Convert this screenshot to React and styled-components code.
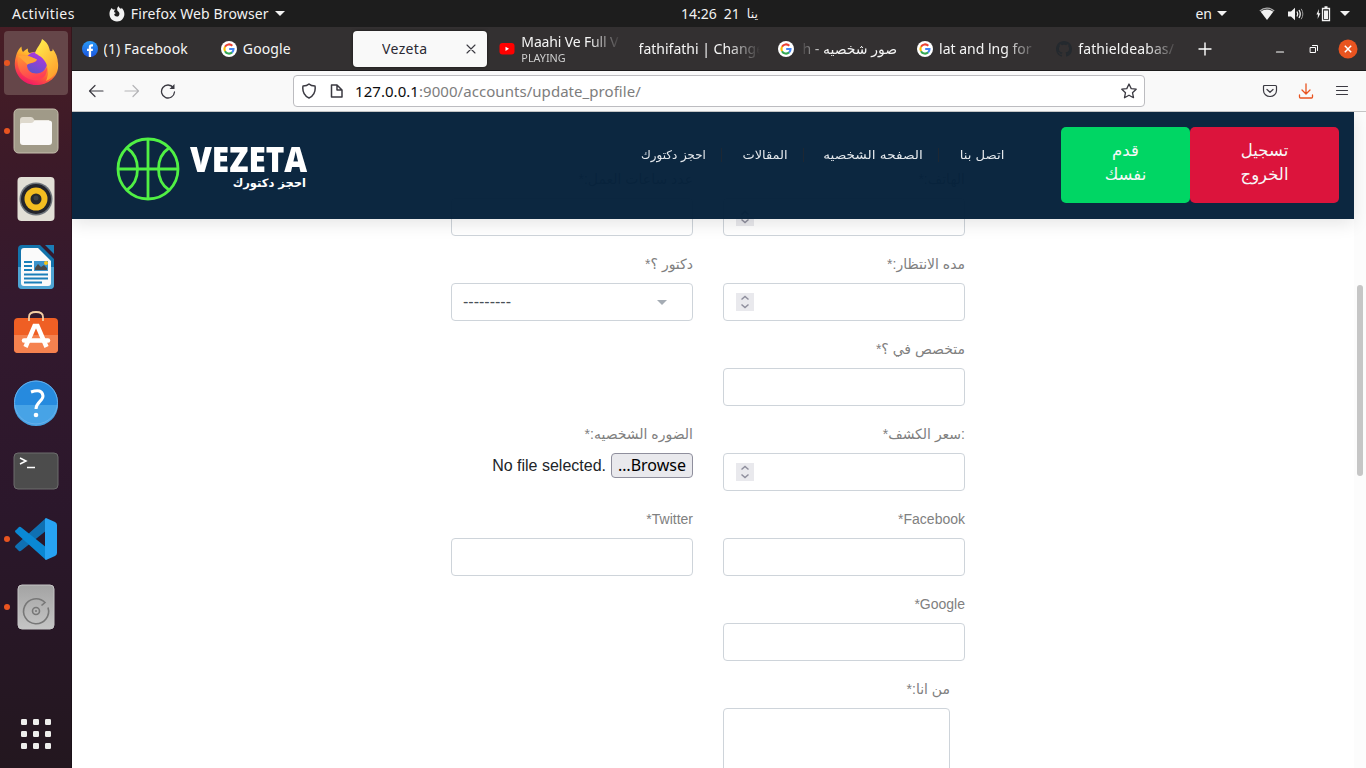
import React from "react";
import styled, { createGlobalStyle } from "styled-components";

const UI_FONT = '"Noto Sans", "Open Sans", "DejaVu Sans", sans-serif';
const PAGE_FONT = '"Liberation Sans", "DejaVu Sans", sans-serif';
const ARABIC_FONT = '"DejaVu Sans", sans-serif';

const Global = createGlobalStyle`
  * { box-sizing: border-box; }
  body { margin: 0; overflow: hidden; background: #fff; font-family: ${UI_FONT}; }
  svg { display: block; flex: none; }
`;

/* ---------- shared ---------- */
const Text = styled.span`
  font-family: ${(p) => p.$font || UI_FONT};
  font-size: ${(p) => p.$size || 14}px;
  letter-spacing: ${(p) => p.$track || 0}px;
  font-weight: ${(p) => p.$weight || 400};
  color: ${(p) => p.$color || "inherit"};
  white-space: nowrap;
`;

/* ---------- desktop shell ---------- */
const Desktop = styled.div`
  width: 1366px;
  height: 768px;
  display: flex;
  flex-direction: column;
  overflow: hidden;
`;

const TopBar = styled.header`
  height: 27px;
  flex: none;
  display: flex;
  align-items: center;
  background: #1d1d1d;
  color: #f2f2f2;
`;
const TopLeft = styled.div`
  width: 681px;
  padding-left: 12px;
  display: flex;
  align-items: center;
`;
const AppMenu = styled.div`
  margin-left: 34px;
  display: flex;
  align-items: center;
  gap: 6px;
`;
const Clock = styled.div`
  display: flex;
  align-items: center;
  gap: 7px;
`;
const Tray = styled.div`
  margin-left: auto;
  padding-right: 16px;
  display: flex;
  align-items: center;
`;
const TrayItem = styled.div`
  display: flex;
  align-items: center;
  gap: 5px;
  margin-left: ${(p) => p.$gap || 0}px;
`;
const Workspace = styled.div`
  flex: 1;
  min-height: 0;
  display: flex;
`;

/* ---------- dock ---------- */
const Dock = styled.nav`
  width: 72px;
  flex: none;
  padding: 4px 4px 2px;
  display: flex;
  flex-direction: column;
  gap: 4px;
  background: linear-gradient(#481d25 0%, #3c1a28 18%, #33192e 38%, #2b172b 65%, #23171f 100%);
  border-right: 1px solid rgba(0, 0, 0, 0.25);
`;
const DockTile = styled.div`
  position: relative;
  width: 64px;
  height: 64px;
  flex: none;
  display: grid;
  place-items: center;
  border-radius: 4px;
  background: ${(p) => (p.$active ? "#654649" : "transparent")};
  margin-top: ${(p) => (p.$last ? "auto" : 0)};
`;
const RunningDot = styled.i`
  position: absolute;
  left: 0;
  top: 29px;
  width: 6px;
  height: 6px;
  border-radius: 50%;
  background: #e95420;
`;

/* ---------- browser chrome ---------- */
const Browser = styled.main`
  flex: 1;
  min-width: 0;
  display: flex;
  flex-direction: column;
`;
const TabStrip = styled.div`
  height: 44px;
  flex: none;
  display: flex;
  align-items: stretch;
  background: #333031;
  border-bottom: 1px solid #1c1b1c;
  color: #f5f5f5;
`;
const Tab = styled.div`
  width: 139.25px;
  flex: none;
  padding: 4px 2.4px 3px 2.6px;
`;
const TabBody = styled.div`
  height: 36px;
  display: flex;
  align-items: center;
  padding: 0 10px 0 7px;
  gap: 6px;
  border-radius: 4px;
  background: ${(p) => (p.$active ? "#f9f9f9" : "transparent")};
  color: ${(p) => (p.$active ? "#2b2a33" : "#f5f5f5")};
  box-shadow: ${(p) => (p.$active ? "0 0 3px rgba(0,0,0,.6)" : "none")};
`;
const TabText = styled.div`
  flex: 1;
  min-width: 0;
  overflow: hidden;
  display: flex;
  flex-direction: column;
  align-items: ${(p) => (p.$rtl ? "flex-end" : "flex-start")};
  margin-left: ${(p) => p.$indent || 0}px;
  margin-right: ${(p) => (p.$rtl ? -2 : p.$fade ? -4 : 0)}px;
  mask-image: ${(p) =>
    p.$fade === "right"
      ? "linear-gradient(to left, transparent, #000 32px)"
      : p.$fade === "left"
      ? "linear-gradient(to right, transparent, #000 24px)"
      : "none"};
`;
const TabLine = styled(Text)`
  line-height: ${(p) => p.$lh || 20}px;
`;
const TabNote = styled(TabLine)`
  padding-top: 1px;
`;
const WindowButtons = styled.div`
  flex: 1;
  display: flex;
  align-items: center;
  justify-content: space-between;
  padding: 0 8px 0 12px;
`;
const WindowGroup = styled.div`
  display: flex;
  align-items: center;
  gap: 24px;
  > :last-child { margin-left: -5px; }
`;
const Toolbar = styled.div`
  height: 41px;
  flex: none;
  display: flex;
  align-items: center;
  background: #f9f9f9;
  border-bottom: 1px solid #c4c4c4;
`;
const NavButtons = styled.div`
  width: 221px;
  padding-left: 16px;
  display: flex;
  align-items: center;
  gap: 20px;
`;
const UrlBar = styled.div`
  width: 852px;
  height: 32px;
  padding: 0 7px;
  display: flex;
  align-items: center;
  background: #fff;
  border: 1px solid #bcbcc0;
  border-radius: 4px;
`;
const UrlText = styled.div`
  flex: 1;
  margin-left: 10px;
  font-size: 15px;
  letter-spacing: 0.05px;
  line-height: 20px;
  color: #7d7d7d;
  white-space: nowrap;
  b { font-weight: 400; color: #0c0c0d; }
`;
const ToolActions = styled.div`
  flex: 1;
  padding-right: 16px;
  display: flex;
  align-items: center;
  justify-content: flex-end;
  gap: 20px;
`;

/* ---------- site ---------- */
const Viewport = styled.div`
  position: relative;
  flex: 1;
  min-height: 0;
  display: flex;
  overflow: hidden;
  background: #fff;
`;
const Page = styled.div`
  flex: 1;
  padding: 57px 0 0 379px;
  overflow: hidden;
`;
const Scrollbar = styled.div`
  width: 12px;
  padding: 173px 0 0 3px;
  background: #fcfcfc;
`;
const Thumb = styled.div`
  width: 6px;
  height: 191px;
  border-radius: 3px;
  background: #c6c6c6;
`;
const SiteHeader = styled.div`
  position: absolute;
  top: 0;
  left: 0;
  right: 12px;
  height: 107px;
  display: flex;
  align-items: flex-start;
  padding: 15px 15px 0 44px;
  background: rgba(4, 32, 58, 0.97);
  box-shadow: 0 5px 16px rgba(0, 0, 0, 0.1);
`;
const Logo = styled.div`
  width: 192px;
  padding-top: 10px;
  display: flex;
  align-items: flex-start;
  justify-content: space-between;
`;
const LogoWords = styled.div`
  width: 119px;
  padding-top: 7px;
  display: flex;
  flex-direction: column;
  align-items: flex-end;
  color: #fff;
`;
const LogoName = styled.div`
  font: 800 36px/30px "Open Sans", sans-serif;
  width: 118px;
  transform: scaleX(0.875);
  transform-origin: 0 50%;
`;
const LogoTag = styled.div`
  padding: 2px 2px 0 0;
  font: 700 11.5px/14px ${ARABIC_FONT};
  white-space: nowrap;
`;
const SiteNav = styled.div`
  margin-left: auto;
  padding: 18px 56px 0 0;
  display: flex;
  align-items: center;
  font: 400 12px/20px ${ARABIC_FONT};
  color: #e4e8ec;
`;
const NavLink = styled.div`
  white-space: nowrap;
  width: ${(p) => p.$w}px;
  display: flex;
  justify-content: center;
  transform: scaleX(${(p) => p.$stretch || 1});
`;
const NavRule = styled.i`
  width: 1px;
  height: 14px;
  margin: 0 ${(p) => p.$right}px 0 ${(p) => p.$left}px;
  background: #1d2733;
`;
const SiteButton = styled.div`
  width: ${(p) => p.$w}px;
  height: 76px;
  padding-top: 12px;
  border-radius: 5px;
  background: ${(p) => p.$bg};
  color: #f7f7f7;
  text-align: center;
  font: 400 16.5px/24px ${ARABIC_FONT};
`;

/* ---------- form ---------- */
const FormRow = styled.div`
  direction: rtl;
  width: 514px;
  height: 85px;
  display: grid;
  grid-template-columns: 242px 242px;
  gap: 30px;
`;
const Field = styled.div`
  width: ${(p) => p.$w || 242}px;
  margin-right: ${(p) => p.$inset || 0}px;
`;
const Label = styled.div`
  height: 29px;
  font: 400 14px/21px ${PAGE_FONT};
  color: #808080;
  white-space: nowrap;
`;
const Input = styled.div`
  height: ${(p) => p.$h || 38}px;
  padding: 0 12px ${(p) => (p.$spread ? "0 11px" : "")};
  display: flex;
  align-items: center;
  justify-content: ${(p) => (p.$spread ? "space-between" : "flex-end")};
  border: 1px solid #ced4da;
  border-radius: 4px;
  background: #fff;
  font: 400 16px/24px ${PAGE_FONT};
  color: #495057;
`;
const SelectCaret = styled.i`
  width: 0;
  margin-right: 13px;
  border: 5px solid transparent;
  border-top-color: #a5acb4;
  border-bottom: 0;
`;
const FilePicker = styled.div`
  display: flex;
  align-items: center;
  gap: 5px;
  font: 400 16px/24px ${PAGE_FONT};
  color: #212529;
  white-space: nowrap;
`;
const BrowseButton = styled.div`
  width: 82px;
  height: 25px;
  padding-bottom: 2px;
  display: grid;
  place-items: center;
  border: 1px solid #8f8f9d;
  border-radius: 4px;
  background: #e9e9ed;
  color: #000;
  font: 400 16px/20px ${UI_FONT};
`;

/* ---------- icons ---------- */
const Caret = () => (
  <svg width="10" height="5"><path d="M0 0H10L5 5Z" fill="#f2f2f2" /></svg>
);
const FirefoxMono = () => (
  <svg width="16" height="16" viewBox="0 0 16 16">
    <path d="M1 4.800 2.600 2 4 3.600Q5 3.200 6.500 3.600 5 4.600 5 6L6.800 7 5.200 8.300C5.400 10.700 8.600 11.400 10 9.400 11 7.700 10.200 6 8.600 5 7.600 3 8.300 1.100 9.700.2 10 1.800 11.200 2.200 12.200 3.100L12.600 1.800C18 7 15 15.600 8 15.600 2 15.600-.8 9.800 1 4.800Z" fill="#f2f2f2" />
  </svg>
);
const Wifi = () => (
  <svg width="16" height="14" viewBox="0 0 16 14">
    <path d="M.8 4C5 .2 11 .2 15.200 4" fill="none" stroke="#aaa" strokeWidth="1.200" />
    <path d="M1.700 4.800C5.500 1.700 10.500 1.700 14.300 4.800L8 13Z" fill="#f2f2f2" />
  </svg>
);
const Volume = () => (
  <svg width="16" height="14" viewBox="0 0 16 14">
    <path d="M0 4.500H3L7 .8V13.200L3 9.500H0Z" fill="#f2f2f2" />
    <path d="M9 4.500Q10.500 7 9 9.500M11 3Q13.500 7 11 11" fill="none" stroke="#f2f2f2" strokeWidth="1.300" />
    <path d="M13.200 1.800Q16.500 7 13.200 12.200" fill="none" stroke="#999" />
  </svg>
);
const Battery = () => (
  <svg width="15" height="16" viewBox="0 0 15 16">
    <path d="M3 3 .4 8.500H2L1.600 13 4.400 7.200H2.700Z" fill="#f2f2f2" />
    <path d="M6.500 2.500H13.500V14.500H6.500ZM8.500 1H11.500" fill="none" stroke="#f2f2f2" strokeWidth="1.300" />
    <path d="M8 4.500H12V13H8Z" fill="#f2f2f2" />
  </svg>
);
const Facebook = () => (
  <svg width="16" height="16" viewBox="0 0 16 16">
    <defs><linearGradient id="fb" x1="0" y1="0" x2="0" y2="1"><stop stopColor="#2a9af5" /><stop offset="1" stopColor="#1a55e0" /></linearGradient></defs>
    <circle cx="8" cy="8" r="8" fill="url(#fb)" />
    <path d="M6.800 16V10H5V7.700H6.800V6.200C6.800 4.200 8 3.300 9.600 3.300H11V5.400H10.100C9.300 5.400 9.100 5.800 9.100 6.400V7.700H11L10.700 10H9.100V16Z" fill="#fff" />
  </svg>
);
const Google = () => (
  <svg width="16" height="16" viewBox="0 0 16 16">
    <circle cx="8" cy="8" r="8" fill="#fff" />
    <g fill="none" strokeWidth="2.100">
      <path d="M11.300 4.700A4.600 4.600 0 0 0 4 5.800" stroke="#ea4335" />
      <path d="M4 5.800A4.600 4.600 0 0 0 4 10.200" stroke="#fbbc05" />
      <path d="M4 10.200A4.600 4.600 0 0 0 11.100 11.400" stroke="#34a853" />
      <path d="M11.100 11.400A4.600 4.600 0 0 0 12.500 8H8.200" stroke="#4285f4" />
    </g>
  </svg>
);
const YouTube = () => (
  <svg width="16" height="12" viewBox="0 0 16 12">
    <rect width="15" height="11.500" x=".5" rx="3" fill="#f00" />
    <path d="M6.500 3.700V7.900L10 5.800Z" fill="#fff" />
  </svg>
);
const GitHub = () => (
  <svg width="16" height="16" viewBox="0 0 16 16">
    <path fill="#24292e" d="M8 0C3.580 0 0 3.580 0 8c0 3.540 2.290 6.530 5.470 7.590.4.070.55-.17.55-.38 0-.19-.01-.82-.01-1.490-2.010.37-2.530-.49-2.690-.94-.09-.23-.48-.94-.82-1.130-.28-.15-.68-.52-.01-.53.63-.01 1.080.58 1.230.82.720 1.210 1.870.87 2.330.66.070-.52.28-.87.510-1.070-1.780-.2-3.640-.89-3.640-3.950 0-.87.310-1.590.82-2.150-.08-.2-.36-1.020.08-2.120 0 0 .67-.21 2.200.82.640-.18 1.320-.27 2-.27s1.360.09 2 .27c1.530-1.040 2.200-.82 2.200-.82.440 1.100.16 1.920.08 2.120.510.56.82 1.270.82 2.150 0 3.070-1.870 3.750-3.650 3.950.29.250.54.730.54 1.480 0 1.070-.01 1.930-.01 2.200 0 .210.150.460.550.380A8.010 8.010 0 0 0 16 8c0-4.420-3.580-8-8-8Z" />
  </svg>
);
const Stroke = ({ s = 16, c = "#3b3a42", w = 1.2, fill = "none", d }) => (
  <svg width={s} height={s} viewBox={`0 0 ${s} ${s}`} fill={fill} stroke={c} strokeWidth={w} strokeLinecap="round" strokeLinejoin="round">
    <path d={d} />
  </svg>
);
const Reload = () => (
  <svg width="16" height="16" viewBox="0 0 16 16">
    <path d="M13.300 4.700A6.500 6.500 0 1 0 14.500 9" fill="none" stroke="#3b3a42" strokeWidth="1.300" strokeLinecap="round" />
    <path d="M14.500 1V6H9.500Z" fill="#3b3a42" />
  </svg>
);
const CloseWindow = () => (
  <svg width="20" height="20" viewBox="0 0 20 20">
    <circle cx="10" cy="10" r="9.500" fill="#e95420" />
    <path d="M6.800 6.800 13.200 13.200M13.200 6.800 6.800 13.200" stroke="#fff" strokeWidth="1.500" />
  </svg>
);

const FirefoxIcon = () => (
  <svg width="46" height="48" viewBox="0 0 46 48">
    <defs>
      <linearGradient id="ffBody" x1="0.8" y1="0.1" x2="0.3" y2="1">
        <stop offset="0" stopColor="#fff14a" /><stop offset=".35" stopColor="#ffb12c" />
        <stop offset=".65" stopColor="#ff5a3a" /><stop offset="1" stopColor="#f0126b" />
      </linearGradient>
      <linearGradient id="ffGlobe" x1="0.8" y1="0" x2="0.3" y2="1">
        <stop offset="0" stopColor="#b833e1" /><stop offset="1" stopColor="#5b55c9" />
      </linearGradient>
      <linearGradient id="ffTail" x1="0" y1="0" x2="0.6" y2="1">
        <stop offset="0" stopColor="#fff44f" /><stop offset="1" stopColor="#ffa22e" />
      </linearGradient>
      <linearGradient id="ffFace" x1="0" y1="0" x2="0.3" y2="1">
        <stop offset="0" stopColor="#ff9a2e" /><stop offset="1" stopColor="#ff3f55" />
      </linearGradient>
    </defs>
    <path d="M3 17C4 13 6 9.500 8.500 7.500 8.500 10 9 12 10 13 12 11 13.500 10 15 9.500 14.500 11.500 15 13 16.500 14 24 12 30 12 35 17L45 24C46.500 37 36 46 23 46 9 46-2 33 3 17Z" fill="url(#ffBody)" />
    <circle cx="23" cy="24" r="11" fill="url(#ffGlobe)" />
    <path d="M29 0C34 3 36 7 37 12 39.500 13 40 11 39.500 9.500 48 20 47 36 33 42 37 33 35 26 31 21 28 17 23 15 22 14 24 8 28 5 29 0Z" fill="url(#ffTail)" />
    <path d="M5 17C10 14 17 18 24 20.500 22 25 16 23.500 14 26 14 31 18 34.500 23 34.500 28 34.500 32 32 34 28 35 39 26 42 20 41 8 39 3 29 5 17Z" fill="url(#ffFace)" />
    <path d="M5 17C12 15 18 18 24 20.500 22 24 17 23.500 14.500 25.500Z" fill="#ffa436" />
  </svg>
);
const FilesIcon = () => (
  <svg width="46" height="46" viewBox="0 0 46 46">
    <rect x="1" y="1" width="44" height="44" rx="4.500" fill="#a09a88" stroke="#c6bfae" />
    <path d="M7 12Q7 9 10 9H18Q20 9 21.500 12H36V20H7Z" fill="#ded9cd" />
    <path d="M7 17Q7 15 9 15H18Q20 15 21.500 12.500H36Q39 12.500 39 15V34Q39 37 36 37H10Q7 37 7 34Z" fill="#faf9f8" />
  </svg>
);
const RhythmboxIcon = () => (
  <svg width="38" height="46" viewBox="0 0 38 46">
    <rect x="0.500" y="1" width="37" height="44" rx="4" fill="#e2dfd6" />
    <circle cx="19" cy="23" r="16.500" fill="#6d7379" />
    <circle cx="19" cy="23" r="15" fill="#23242c" />
    <circle cx="19" cy="23" r="11.500" fill="#f3bd20" />
    <circle cx="19" cy="23" r="5.500" fill="#26282c" />
    <circle cx="19" cy="22" r="2.500" fill="#3c4044" />
  </svg>
);
const WriterIcon = () => (
  <svg width="38" height="46" viewBox="0 0 38 46">
    <path d="M5 1H23L37 15V41Q37 45 33 45H5Q1 45 1 41V5Q1 1 5 1Z" fill="#1373ab" />
    <path d="M1 23H37V41Q37 45 33 45H5Q1 45 1 41Z" fill="#4ea4d3" />
    <path d="M28 1H37V10Z" fill="#1b7db7" />
    <path d="M7 4H21L34 17V39Q34 42 31 42H7Q4 42 4 39V7Q4 4 7 4Z" fill="#fafafa" />
    <path d="M7 18H15M7 22H15M7 26H15M7 30.500H31M7 34.500H31M7 38.500H25" stroke="#1a7fb9" strokeWidth="1.800" />
    <rect x="17" y="17" width="14" height="10" fill="#3c94cd" />
    <path d="M18 26V24L21 20 24 23 27 21 30 24V26Z" fill="#4a4a4a" /><circle cx="29" cy="19" r="2" fill="#f7c518" />
  </svg>
);
const StoreIcon = () => (
  <svg width="46" height="52" viewBox="0 0 46 52">
    <rect x="1" y="9" width="44" height="35" rx="4" fill="#ef5f24" />
    <path d="M1 26H45V40Q45 44 41 44H5Q1 44 1 40Z" fill="#f5824f" />
    <path d="M16 12V8Q16 3 23 3T30 8V12" fill="none" stroke="#f6cfa4" strokeWidth="1.800" />
    <path d="M12.500 38 21.500 17H24.500L33.500 38" fill="none" stroke="#fff" strokeWidth="4.500" />
    <path d="M11 31.500H35" stroke="#fff" strokeWidth="4.500" strokeLinecap="round" />
  </svg>
);
const HelpIcon = () => (
  <svg width="46" height="46" viewBox="0 0 46 46">
    <circle cx="23" cy="22.500" r="22" fill="#268ade" />
    <path d="M1 25A22 21 0 0 0 45 25Z" fill="#47a3e6" />
    <circle cx="23" cy="22.500" r="21.500" fill="none" stroke="#68b0ea" />
    <path d="M18 12Q29 8 30 16C30 21 23 22 23 29" fill="none" stroke="#fff" strokeWidth="3" />
    <circle cx="23" cy="35" r="2.300" fill="#fff" />
  </svg>
);
const TerminalIcon = () => (
  <svg width="46" height="38" viewBox="0 0 46 38">
    <rect x="1" y="1" width="44" height="36" rx="4" fill="#4c4c4c" stroke="#6d6d6d" />
    <path d="M7 6 13 9 7 12" fill="none" stroke="#fff" strokeWidth="1.500" /><path d="M14 15.500H22" stroke="#fff" strokeWidth="1.500" />
  </svg>
);
const CodeIcon = () => (
  <svg width="44" height="44" viewBox="0 0 44 44">
    <path d="M32 1 2 28Q0 30 2 31L5 34Q6 35 8 33L33 13Z" fill="#0f70b3" />
    <path d="M32 43 2 16Q0 14 2 13L5 10Q6 9 8 11L33 31Z" fill="#0a88d4" />
    <path d="M32 1 41 5Q43 6 43 8V36Q43 38 41 39L32 43 31 42V2Z" fill="#27a3f3" />
  </svg>
);
const DiskIcon = () => (
  <svg width="38" height="46" viewBox="0 0 38 46">
    <defs><linearGradient id="disk" x2="0" y2="1"><stop stopColor="#a3a3a3" /><stop offset="1" stopColor="#c5c5c5" /></linearGradient></defs>
    <rect x="1" y="1" width="36" height="44" rx="4" fill="url(#disk)" stroke="#c5c5c5" />
    <g fill="none" stroke="#777" strokeWidth="1.600">
      <circle cx="19" cy="27" r="3.500" /><path d="M24.500 21.500 28 18.500A12.500 12.500 0 1 0 31 23.500" />
    </g>
    <circle cx="19" cy="27" r="1" fill="#777" />
  </svg>
);
const AppsIcon = () => (
  <svg width="32" height="32" viewBox="0 0 32 32" fill="#eeeeec">
    {[1, 13, 25].map((y) => [1, 13, 25].map((x) => <rect key={`${x}-${y}`} x={x} y={y} width="6" height="6" rx="1.200" />))}
  </svg>
);
const Ball = () => (
  <svg width="64" height="64" viewBox="0 0 64 64" fill="none" stroke="#50f044" strokeWidth="2.800">
    <circle cx="32" cy="32" r="30" />
    <path d="M32 2V62M2 32H62M11 11Q21.500 18 21.500 32T11 53M53 11Q42.500 18 42.500 32T53 53" />
  </svg>
);
const Spinner = () => (
  <svg width="18" height="18" viewBox="0 0 18 18">
    <rect width="18" height="18" fill="#e9e9ed" />
    <path d="M5.500 6.500 9 3.500 12.500 6.500M5.500 11.500 9 14.500 12.500 11.500" fill="none" stroke="#8f8f9d" strokeWidth="1.500" />
  </svg>
);

const dockItems = [
  { id: "firefox", icon: <FirefoxIcon />, running: true, active: true },
  { id: "files", icon: <FilesIcon />, running: true },
  { id: "music", icon: <RhythmboxIcon /> },
  { id: "writer", icon: <WriterIcon /> },
  { id: "store", icon: <StoreIcon /> },
  { id: "help", icon: <HelpIcon /> },
  { id: "terminal", icon: <TerminalIcon /> },
  { id: "code", icon: <CodeIcon />, running: true },
  { id: "disk", icon: <DiskIcon />, running: true },
];

const tabs = [
  { title: "(1) Facebook", icon: <Facebook />, track: 0.12 },
  { title: "Google", icon: <Google />, track: 0.1 },
  { title: "Vezeta", active: true, indent: 22, track: 0.35 },
  { title: "Maahi Ve Full V", note: "PLAYING", icon: <YouTube />, fade: "right", track: -0.15 },
  { title: "fathifathi | Change", fade: "right" },
  { title: "صور شخصيه - h", icon: <Google />, fade: "left", rtl: true },
  { title: "lat and lng for", icon: <Google />, fade: "right" },
  { title: "fathieldeabas/", icon: <GitHub />, fade: "right", track: 0.1 },
];

const formRows = [
  [{ label: "الهاتف:*", type: "number" }, { label: "عدد ساعات العمل:*" }],
  [{ label: "مده الانتظار:*", type: "number" }, { label: "دكتور ؟*", type: "select" }],
  [{ label: "متخصص في ؟*" }],
  [{ label: ":سعر الكشف*", type: "number" }, { label: "الضوره الشخصيه:*", type: "file" }],
  [{ label: "Facebook*" }, { label: "Twitter*" }],
  [{ label: "Google*" }],
  [{ label: "من انا:*", type: "area" }],
];

function Control({ type }) {
  if (type === "file")
    return (
      <FilePicker>
        <BrowseButton>Browse…</BrowseButton>
        <span dir="ltr">No file selected.</span>
      </FilePicker>
    );
  if (type === "select")
    return <Input $spread dir="ltr"><span>---------</span><SelectCaret /></Input>;
  return <Input $h={type === "area" ? 120 : 38}>{type === "number" && <Spinner />}</Input>;
}

export default function App() {
  return (
    <Desktop>
      <Global />
      <TopBar>
        <TopLeft>
          <Text $size={14} $track={0.45}>Activities</Text>
          <AppMenu><FirefoxMono /><Text $size={14} $track={0.13}>Firefox Web Browser</Text><Caret /></AppMenu>
        </TopLeft>
        <Clock>
          <Text $size={14}>14:26</Text><Text $size={14}>21</Text><Text $size={12.5} $font={ARABIC_FONT} dir="rtl">ينا</Text>
        </Clock>
        <Tray>
          <TrayItem><Text $size={14}>en</Text><Caret /></TrayItem>
          <TrayItem $gap={32}><Wifi /></TrayItem>
          <TrayItem $gap={13}><Volume /></TrayItem>
          <TrayItem $gap={12}><Battery /></TrayItem>
          <TrayItem $gap={9}><Caret /></TrayItem>
        </Tray>
      </TopBar>
      <Workspace>
        <Dock>
          {dockItems.map((d) => (
            <DockTile key={d.id} $active={d.active}>{d.running && <RunningDot />}{d.icon}</DockTile>
          ))}
          <DockTile $last><AppsIcon /></DockTile>
        </Dock>
        <Browser>
          <TabStrip>
            {tabs.map((t) => (
              <Tab key={t.title}>
                <TabBody $active={t.active}>
                  {t.icon}
                  <TabText $fade={t.fade} $indent={t.indent} $rtl={t.rtl}>
                    <TabLine $track={t.track} $lh={t.note ? 17 : 20} dir={t.rtl ? "rtl" : "ltr"}>{t.title}</TabLine>
                    {t.note && <TabNote $size={10.8} $lh={14} $color="#d0d0d0">{t.note}</TabNote>}
                  </TabText>
                  {t.active && <Stroke s={12} w={1.1} d="M2 2 10 10M10 2 2 10" />}
                </TabBody>
              </Tab>
            ))}
            <WindowButtons>
              <Stroke s={14} c="#fff" w={1.4} d="M7 1V13M1 7H13" />
              <WindowGroup>
                <Stroke s={10} c="#fff" w={1.2} d="M1.500 8H8.500" />
                <Stroke s={10} c="#fff" w={1} d="M1.500 3.500H6.500V8.500H1.500ZM3.500 1.500H8.500V6.500" />
                <CloseWindow />
              </WindowGroup>
            </WindowButtons>
          </TabStrip>
          <Toolbar>
            <NavButtons>
              <Stroke d="M15 8H1.500M7 2.500 1.500 8 7 13.500" />
              <Stroke c="#b5b5b8" d="M1 8H14.500M9 2.500 14.500 8 9 13.500" />
              <Reload />
            </NavButtons>
            <UrlBar>
              <Stroke w={1.500} d="M8 1C6.500 2.500 4 3 2 3 1 9 4 13.500 8 15 12 13.500 15 9 14 3 12 3 9.500 2.500 8 1Z" />
              <Stroke s={28} w={1.500} d="M14.500 8H20L25 13V20H14.500ZM20 8V13H25" />
              <UrlText><b>127.0.0.1</b>:9000/accounts/update_profile/</UrlText>
              <Stroke w={1.300} d="M8 1 10.200 5.600 15.200 6.200 11.500 9.700 12.500 14.700 8 12.200 3.500 14.700 4.500 9.700.8 6.200 5.800 5.600Z" />
            </UrlBar>
            <ToolActions>
              <Stroke d="M2.500 2.500H13.500Q14.500 2.500 14.500 3.500V7.500A6.500 6 0 0 1 1.500 7.500V3.500Q1.500 2.500 2.500 2.500ZM5 6.500 8 9.300 11 6.500" />
              <Stroke c="#e95420" w={1.300} d="M8 .8V10.500M4 7 8 11 12 7M1.500 12V14Q1.500 15 2.500 15H13.500Q14.500 15 14.500 14V12" />
              <Stroke d="M2.500 3.500H13.500M2.500 7.500H13.500M2.500 11.500H13.500" />
            </ToolActions>
          </Toolbar>
          <Viewport>
            <Page>
              {formRows.map((row) => (
                <FormRow key={row[0].label}>
                  {row.map((f) => (
                    <Field key={f.label} $w={f.type === "area" ? 227 : 242} $inset={f.type === "area" ? 15 : 0}>
                      <Label>{f.label}</Label>
                      <Control type={f.type} />
                    </Field>
                  ))}
                </FormRow>
              ))}
            </Page>
            <Scrollbar><Thumb /></Scrollbar>
            <SiteHeader>
              <Logo>
                <Ball />
                <LogoWords>
                  <LogoName>VEZETA</LogoName>
                  <LogoTag dir="rtl">احجز دكتورك</LogoTag>
                </LogoWords>
              </Logo>
              <SiteNav>
                <NavLink dir="rtl" $w={65} $stretch={0.99}>احجز دكتورك</NavLink>
                <NavRule $left={15} $right={20} />
                <NavLink dir="rtl" $w={46} $stretch={1.08}>المقالات</NavLink>
                <NavRule $left={15} $right={19} />
                <NavLink dir="rtl" $w={100} $stretch={1.14}>الصفحه الشخصيه</NavLink>
                <NavRule $left={15} $right={20} />
                <NavLink dir="rtl" $w={46} $stretch={1.1}>اتصل بنا</NavLink>
              </SiteNav>
              <SiteButton $w={129} $bg="#00d664" dir="rtl">قدم<br />نفسك</SiteButton>
              <SiteButton $w={149} $bg="#dc143c" dir="rtl">تسجيل<br />الخروج</SiteButton>
            </SiteHeader>
          </Viewport>
        </Browser>
      </Workspace>
    </Desktop>
  );
}
